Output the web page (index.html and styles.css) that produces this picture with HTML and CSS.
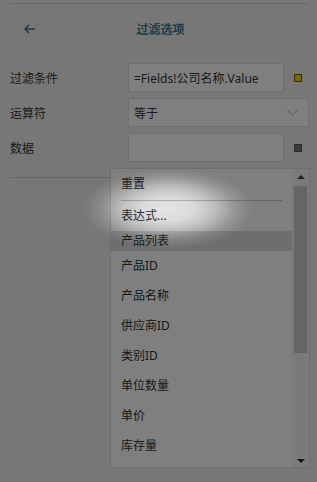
FILE: index.html
```html
<!DOCTYPE html>
<html lang="zh-CN">
<head>
    <meta charset="UTF-8">
    <meta name="viewport" content="width=device-width, initial-scale=1.0">
    <title>过滤选项</title>
    <link rel="stylesheet" href="styles.css">
</head>
<body>
    <div class="panel">
        <div class="top-rule"></div>
        <div class="header">
            <span class="back">
                <svg width="12" height="10" viewBox="0 0 12 10"><path d="M5 1 L1 5 L5 9 M1 5 H11" fill="none" stroke="#3d7490" stroke-width="1.5"/></svg>
            </span>
            <h1>过滤选项</h1>
        </div>

        <div class="form">
            <div class="row">
                <label>过滤条件</label>
                <div class="field">=Fields!公司名称.Value</div>
                <span class="swatch yellow"></span>
            </div>
            <div class="row">
                <label>运算符</label>
                <div class="field select">
                    等于
                    <svg class="chev" width="11" height="6" viewBox="0 0 11 6"><path d="M0.5 0.5 L5.5 5 L10.5 0.5" fill="none" stroke="#b5b5b5" stroke-width="1"/></svg>
                </div>
            </div>
            <div class="row">
                <label>数据</label>
                <div class="field"></div>
                <span class="swatch gray"></span>
            </div>
        </div>
        <div class="divider"></div>

        <div class="menu">
            <ul class="menu-list">
                <li class="first">重置</li>
                <li class="sep"></li>
                <li>表达式...</li>
                <li class="active">产品列表</li>
                <li>产品ID</li>
                <li>产品名称</li>
                <li>供应商ID</li>
                <li>类别ID</li>
                <li>单位数量</li>
                <li>单价</li>
                <li>库存量</li>
            </ul>
            <div class="scrollbar">
                <span class="arrow up"></span>
                <div class="track"><div class="thumb"></div></div>
                <span class="arrow down"></span>
            </div>
        </div>
    </div>
    <div class="dim"></div>
</body>
</html>
```

FILE: styles.css
```css
* {
    margin: 0;
    padding: 0;
    box-sizing: border-box;
}

body {
    font-family: "Noto Sans", "Noto Sans CJK SC", sans-serif;
    font-size: 12px;
    color: #333;
    background-color: #eeeeee;
    width: 317px;
    height: 482px;
    overflow: hidden;
}

.panel {
    position: relative;
    height: 482px;
    padding: 3px 8px 0 10px;
}

.top-rule {
    border-top: 1px solid #d2d2d2;
}

.header {
    position: relative;
    height: 50px;
    display: flex;
    align-items: center;
    justify-content: center;
}

.back {
    position: absolute;
    left: 14px;
    top: 20px;
    line-height: 0;
}

.header h1 {
    font-size: 12px;
    font-weight: bold;
    color: #3d7490;
    margin-left: 2px;
}

.form {
    margin-top: 9px;
    display: flex;
    flex-direction: column;
    gap: 6px;
}

.row {
    display: flex;
    align-items: center;
    height: 29px;
}

.row label {
    width: 118px;
    font-size: 12px;
    color: #333;
}

.field {
    width: 156px;
    height: 29px;
    background: #fefefe;
    border: 1px solid #e0e0e0;
    padding: 0 5px;
    display: flex;
    align-items: center;
    color: #333;
}

.field.select {
    width: 181px;
    justify-content: space-between;
    padding-right: 10px;
}

.swatch {
    width: 8px;
    height: 8px;
    margin-left: 10px;
    border: 1px solid #444;
}

.swatch.yellow {
    background: #f3d600;
    border-color: #6b5d00;
}

.swatch.gray {
    background: #777;
    border-color: #555;
}

.divider {
    margin-top: 15px;
    border-top: 1px solid #cfcfcf;
    width: 110px;
}

.menu {
    position: absolute;
    left: 110px;
    top: 168px;
    width: 200px;
    height: 300px;
    background: #fff;
    border: 1px solid #dcdcdc;
    display: flex;
}

.menu-list {
    list-style: none;
    flex: 1;
    padding-top: 1px;
}

.menu-list li {
    height: 30px;
    line-height: 30px;
    padding-left: 10px;
    color: #333;
}

.menu-list li.first {
    height: 28px;
    line-height: 28px;
}

.menu-list li.sep {
    height: 1px;
    margin: 2px 10px 0;
    background: #c8c8c8;
}

.menu-list li.active {
    background: #dcdcdc;
    height: 20px;
    line-height: 20px;
}

.scrollbar {
    width: 17px;
    background: #f4f4f4;
    display: flex;
    flex-direction: column;
    align-items: center;
    padding: 6px 2px 4px;
}

.arrow {
    width: 0;
    height: 0;
    border-left: 4px solid transparent;
    border-right: 4px solid transparent;
}

.arrow.up {
    border-bottom: 4px solid #444;
}

.arrow.down {
    border-top: 4px solid #222;
}

.track {
    flex: 1;
    width: 13px;
    margin: 7px 0 6px;
}

.thumb {
    height: 167px;
    background: #cacaca;
}

/* dim overlay with a soft spotlight over the menu */
.dim {
    position: absolute;
    inset: 0;
    background: radial-gradient(ellipse 85px 40px at 168px 209px, rgba(0,0,0,0.1) 0%, rgba(0,0,0,0.14) 30%, rgba(0,0,0,0.26) 55%, rgba(0,0,0,0.42) 80%, rgba(0,0,0,0.5) 100%);
}
```
